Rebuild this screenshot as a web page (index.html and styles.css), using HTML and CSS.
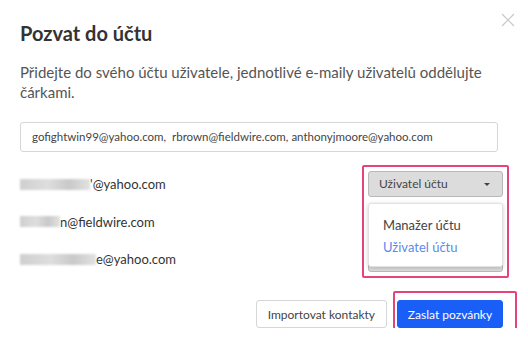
FILE: index.html
```html
<!DOCTYPE html>
<html lang="cs">
<head>
  <meta charset="UTF-8">
  <title>Pozvat do účtu</title>
  <link rel="stylesheet" href="styles.css">
</head>
<body>
  <div class="modal">
    <button class="close" aria-label="Zavřít">
      <svg width="14" height="14" viewBox="0 0 14 14"><path d="M1 1 L13 13 M13 1 L1 13" stroke="#c8c8c8" stroke-width="1.2" fill="none"/></svg>
    </button>

    <h1>Pozvat do účtu</h1>
    <p class="intro">Přidejte do svého účtu uživatele, jednotlivé e-maily uživatelů oddělujte čárkami.</p>

    <div class="emails">gofightwin99@yahoo.com,&nbsp; rbrown@fieldwire.com, anthonyjmoore@yahoo.com</div>

    <div class="rows">
      <div class="row">
        <span class="email"><span class="blur w72"></span>'@yahoo.com</span>
        <div class="select-wrap">
          <div class="select">Uživatel účtu <span class="caret"></span></div>
          <ul class="menu">
            <li>Manažer účtu</li>
            <li class="active">Uživatel účtu</li>
          </ul>
        </div>
      </div>
      <div class="row">
        <span class="email"><span class="blur w40"></span>n@fieldwire.com</span>
        <div class="select-wrap">
          <div class="select"></div>
        </div>
      </div>
      <div class="row">
        <span class="email"><span class="blur w75"></span>e@yahoo.com</span>
        <div class="select-wrap">
          <div class="select"></div>
        </div>
      </div>
      <div class="mark mark-select"></div>
    </div>

    <div class="footer">
      <button class="btn">Importovat kontakty</button>
      <button class="btn btn-primary">Zaslat pozvánky</button>
      <div class="mark mark-send"></div>
    </div>
  </div>
</body>
</html>
```

FILE: styles.css
```css
* {
  box-sizing: border-box;
}
body {
  margin: 0;
  background: #fff;
  font-family: Lato, "Noto Sans", sans-serif;
  color: #333;
}
.modal {
  position: relative;
  padding: 20px 30px 0 20px;
}
.close {
  position: absolute;
  top: 13px;
  right: 13px;
  border: none;
  background: none;
  padding: 0;
  cursor: pointer;
}
h1 {
  margin: 0;
  font-size: 20px;
  font-weight: 700;
  line-height: 26px;
  color: #333;
}
.intro {
  margin: 16px 0 0;
  font-size: 15px;
  line-height: 20px;
  color: #555;
}
.emails {
  margin-top: 20px;
  height: 30px;
  border: 1px solid #d6d6d6;
  border-radius: 3px;
  padding: 0 11px;
  font-size: 11.5px;
  line-height: 28px;
  color: #444;
}
.rows {
  position: relative;
  margin-top: 19px;
  margin-right: -5px;
  display: flex;
  flex-direction: column;
  gap: 11.5px;
}
.row {
  display: flex;
  align-items: center;
  justify-content: space-between;
  height: 26px;
}
.email {
  font-size: 13px;
  color: #333;
  display: flex;
  align-items: center;
}
.blur {
  display: inline-block;
  height: 11px;
  background: linear-gradient(90deg, #cfcfcf, #dedede 40%, #c9c9c9 70%, #e2e2e2);
  filter: blur(1px);
}
.w72 { width: 70px; }
.w40 { width: 40px; }
.w75 { width: 76px; }
.select-wrap {
  position: relative;
  width: 135px;
}
.select {
  height: 26px;
  border: 1px solid #b9b9b9;
  border-radius: 3px;
  background: #dcdcdc;
  padding: 0 10px;
  font-size: 12px;
  line-height: 24px;
  color: #444;
  display: flex;
  justify-content: space-between;
  align-items: center;
}
.caret {
  width: 0;
  height: 0;
  border-left: 3px solid transparent;
  border-right: 3px solid transparent;
  border-top: 3px solid #444;
  margin-right: 2px;
}
.menu {
  position: absolute;
  top: 32px;
  left: 0;
  right: 0;
  z-index: 2;
  margin: 0;
  padding: 10px 0 8px 14px;
  list-style: none;
  background: #fff;
  border: 1px solid #e2e2e2;
  border-radius: 3px;
  box-shadow: 0 1px 4px rgba(0, 0, 0, 0.2);
  font-size: 13px;
  line-height: 22px;
  color: #444;
}
.menu .active {
  color: #5b8ae8;
}
.mark {
  position: absolute;
  border: 2.5px solid #e5447a;
  border-radius: 2px;
  z-index: 3;
}
.mark-select {
  top: -6px;
  right: -6px;
  width: 147px;
  height: 113px;
}
.footer {
  position: relative;
  display: flex;
  justify-content: flex-end;
  align-items: center;
  gap: 10px;
  margin-top: 28px;
  margin-right: -5px;
}
.btn {
  font-family: Lato, "Noto Sans", sans-serif;
  font-size: 12px;
  height: 28px;
  padding: 0 11px;
  border: 1px solid #d6d6d6;
  border-radius: 3px;
  background: #fff;
  color: #444;
  cursor: pointer;
}
.btn-primary {
  width: 106px;
  padding: 0;
  border-color: #1a5ef8;
  background: #1a5ef8;
  color: #fff;
}
.mark-send {
  top: -9px;
  right: -14px;
  width: 124px;
  height: 44px;
}
```
